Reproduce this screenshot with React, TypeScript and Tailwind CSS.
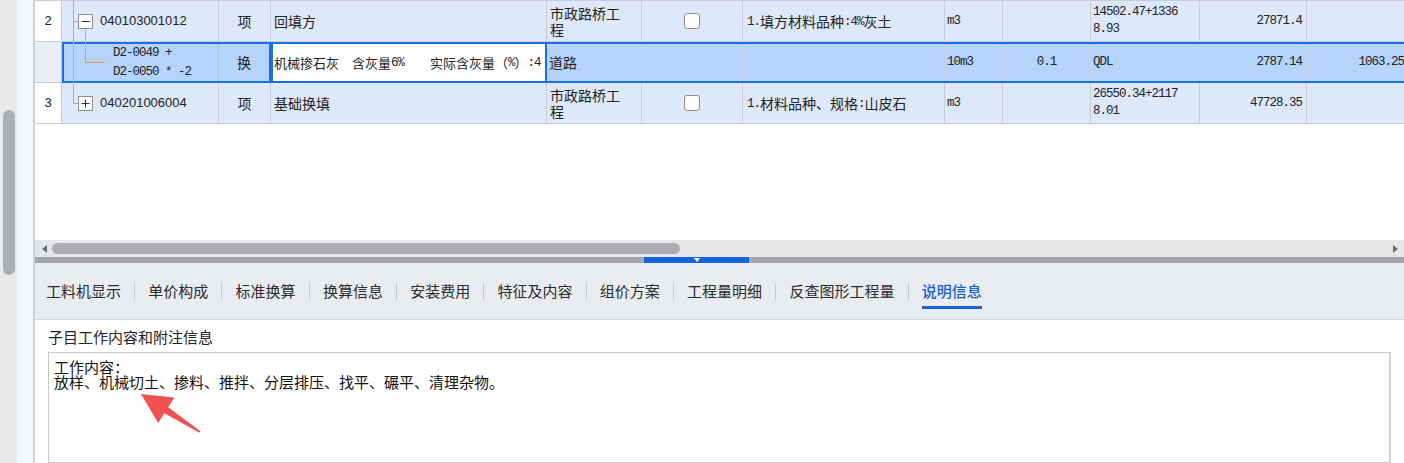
import React from 'react';

// column widths (px): no, code, type, name, major, check, feature, unit, qty, expr, amount, last
const W = ['w-[27px]', 'w-[157px]', 'w-[52px]', 'w-[276px]', 'w-[95px]', 'w-[101px]', 'w-[202px]', 'w-[58px]', 'w-[88px]', 'w-[109px]', 'w-[107px]', 'w-[97px]'];

const MONO = "font-['Liberation_Mono',monospace] text-[12.5px] tracking-[-1px]";

// ascii runs in a condensed mono face, cjk in the sans face (mimics SimSun half-width)
const Mix = ({ t }: { t: string }) => {
  const parts = t.split(/([\x00-\x7f]+)/).filter(Boolean);
  return (
    <>
      {parts.map((p, i) =>
        /^[\x00-\x7f]+$/.test(p) ? (
          <span key={i} className="relative top-[1px] font-['Liberation_Mono',monospace] text-[12.5px] tracking-[-1px] whitespace-pre">{p}</span>
        ) : (
          <span key={i}>{p}</span>
        )
      )}
    </>
  );
};

const Cell = ({ w, className = '', children }: { w: string; className?: string; children?: React.ReactNode }) => (
  <div className={`${w} shrink-0 h-full border-r border-[#c9ced6] flex items-center overflow-hidden ${className}`}>{children}</div>
);

const Check = () => <div className="w-4 h-4 border border-[#8c8c8c] rounded-[3px] bg-white" />;

const Tree = ({ kind }: { kind: 'open' | 'child' | 'closed' }) => (
  <svg className="absolute left-0 top-0 overflow-visible pointer-events-none" width="60" height="41">
    {kind === 'open' && (
      <g>
        <line x1="11.5" y1="0" x2="11.5" y2="41" stroke="#f29a50" />
        <line x1="11" y1="20.5" x2="16" y2="20.5" stroke="#f29a50" />
        <line x1="23.5" y1="28" x2="23.5" y2="41" stroke="#f29a50" />
        <rect x="16.5" y="13.5" width="14" height="14" fill="#fff" stroke="#8e8e8e" />
        <line x1="19.5" y1="20.5" x2="27.5" y2="20.5" stroke="#333" />
      </g>
    )}
    {kind === 'child' && (
      <g>
        <line x1="9.5" y1="-2" x2="9.5" y2="41" stroke="#f29a50" />
        <line x1="21.5" y1="-2" x2="21.5" y2="18.5" stroke="#f29a50" />
        <line x1="21" y1="18.5" x2="41" y2="18.5" stroke="#f29a50" />
      </g>
    )}
    {kind === 'closed' && (
      <g>
        <line x1="11.5" y1="0" x2="11.5" y2="20.5" stroke="#f29a50" />
        <line x1="11" y1="20.5" x2="16" y2="20.5" stroke="#f29a50" />
        <rect x="16.5" y="13.5" width="14" height="14" fill="#fff" stroke="#8e8e8e" />
        <line x1="19.5" y1="20.5" x2="27.5" y2="20.5" stroke="#333" />
        <line x1="23.5" y1="16.5" x2="23.5" y2="24.5" stroke="#333" />
      </g>
    )}
  </svg>
);

const tabs = ['工料机显示', '单价构成', '标准换算', '换算信息', '安装费用', '特征及内容', '组价方案', '工程量明细', '反查图形工程量', '说明信息'];

export default function App() {
  return (
    <div className="relative w-[1404px] h-[463px] overflow-hidden flex bg-white text-[#222] font-['Noto_Sans_CJK_SC',sans-serif]">
      {/* left gutter with vertical scrollbar */}
      <div className="w-[17px] shrink-0 bg-[#e8e9ea] flex flex-col items-center pt-[110px]">
        <div className="w-[12px] h-[165px] rounded-full bg-[#adb0b3]" />
      </div>
      <div className="w-[16px] shrink-0 bg-[#f1f8fe]" />
      <div className="w-[2px] shrink-0 bg-[#cdd1d6]" />

      <div className="flex-1 flex flex-col min-w-0">
        {/* grid */}
        <div className="h-[240px] border-t border-[#c9ced6] flex flex-col">
          <div className="flex h-[41px] border-b border-[#c9ced6] bg-[#dde8fa] text-[14px]">
            <Cell w={W[0]} className="bg-white justify-center font-['Liberation_Sans',sans-serif] text-[13px]">2</Cell>
            <Cell w={W[1]} className="relative pl-[38px] font-['Liberation_Sans',sans-serif] text-[13px]">
              <Tree kind="open" />
              040103001012
            </Cell>
            <Cell w={W[2]} className="justify-center">项</Cell>
            <Cell w={W[3]} className="pl-[3px]">回填方</Cell>
            <Cell w={W[4]} className="pl-[3px] leading-[16px]">市政路桥工<br />程</Cell>
            <Cell w={W[5]} className="justify-center"><Check /></Cell>
            <Cell w={W[6]} className="pl-[4px] whitespace-nowrap"><Mix t="1.填方材料品种:4%灰土" /></Cell>
            <Cell w={W[7]} className={`pl-[2px] ${MONO}`}>m3</Cell>
            <Cell w={W[8]} />
            <Cell w={W[9]} className={`pl-[2px] leading-[17px] ${MONO}`}><div>14502.47+1336<br />8.93</div></Cell>
            <Cell w={W[10]} className={`justify-end pr-[4px] ${MONO}`}>27871.4</Cell>
            <Cell w={W[11]} className="border-r-0" />
          </div>

          {/* selected sub row */}
          <div className="flex h-[41px] bg-[#b5d4fb] text-[14px]">
            <Cell w={W[0]} className="bg-[#eaeef4] border-b" />
            <div className="w-[209px] shrink-0 h-full flex border-2 border-[#1b6fe4]">
              <div className="relative w-[155px] h-full border-r border-[#b3bccb] flex items-center pl-[49px]">
                <Tree kind="child" />
                <div className={`leading-[19px] whitespace-pre ${MONO}`}>D2-0049 +{'\n'}D2-0050 * -2</div>
              </div>
              <div className="flex-1 flex items-center justify-center">换</div>
            </div>
            <div className="w-[276px] shrink-0 h-full border-2 border-[#1b6fe4] bg-white flex items-center pl-[1px] whitespace-nowrap overflow-hidden text-[13px]">
              <Mix t="机械掺石灰　含灰量6%　　实际含灰量（%）:4" />
            </div>
            <div className="flex-1 flex h-full border-y-2 border-[#1b6fe4]">
              <Cell w={W[4]} className="pl-[2px]">道路</Cell>
              <Cell w={W[5]} />
              <Cell w={W[6]} />
              <Cell w={W[7]} className={`pl-[2px] ${MONO}`}>10m3</Cell>
              <Cell w={W[8]} className={`justify-center ${MONO}`}>0.1</Cell>
              <Cell w={W[9]} className={`pl-[2px] ${MONO}`}>QDL</Cell>
              <Cell w={W[10]} className={`justify-end pr-[4px] ${MONO}`}>2787.14</Cell>
              <Cell w={W[11]} className={`border-r-0 justify-end ${MONO}`}>1063.25</Cell>
            </div>
          </div>

          <div className="flex h-[41px] border-b border-[#c9ced6] bg-[#dde8fa] text-[14px]">
            <Cell w={W[0]} className="bg-white justify-center font-['Liberation_Sans',sans-serif] text-[13px]">3</Cell>
            <Cell w={W[1]} className="relative pl-[38px] font-['Liberation_Sans',sans-serif] text-[13px]">
              <Tree kind="closed" />
              040201006004
            </Cell>
            <Cell w={W[2]} className="justify-center">项</Cell>
            <Cell w={W[3]} className="pl-[3px]">基础换填</Cell>
            <Cell w={W[4]} className="pl-[3px] leading-[16px]">市政路桥工<br />程</Cell>
            <Cell w={W[5]} className="justify-center"><Check /></Cell>
            <Cell w={W[6]} className="pl-[4px] whitespace-nowrap"><Mix t="1.材料品种、规格:山皮石" /></Cell>
            <Cell w={W[7]} className={`pl-[2px] ${MONO}`}>m3</Cell>
            <Cell w={W[8]} />
            <Cell w={W[9]} className={`pl-[2px] leading-[17px] ${MONO}`}><div>26550.34+2117<br />8.01</div></Cell>
            <Cell w={W[10]} className={`justify-end pr-[4px] ${MONO}`}>47728.35</Cell>
            <Cell w={W[11]} className="border-r-0" />
          </div>
          <div className="flex-1 bg-white" />
        </div>

        {/* horizontal scrollbar */}
        <div className="h-[17px] bg-[#e5e6e8] flex items-center">
          <svg className="ml-[7px]" width="5" height="8" viewBox="0 0 5 8"><path d="M5 0 L0 4 L5 8 Z" fill="#6b6d70" /></svg>
          <div className="ml-[5px] w-[628px] h-[11px] rounded-full bg-[#abadb1]" />
          <div className="flex-1" />
          <svg className="mr-[6px]" width="5" height="8" viewBox="0 0 5 8"><path d="M0 0 L5 4 L0 8 Z" fill="#6b6d70" /></svg>
        </div>

        {/* splitter */}
        <div className="h-[6px] bg-[#a5a7aa] flex">
          <div className="ml-[609px] w-[105px] h-full bg-[#1664d9] flex justify-center items-center">
            <svg width="6" height="4" viewBox="0 0 6 4"><path d="M0 0 L6 0 L3 4 Z" fill="#fff" /></svg>
          </div>
        </div>

        {/* tabs */}
        <div className="h-[57px] bg-[#e9ecf0] border-b border-[#d5d8dc] flex items-start pl-[11px] gap-[13.15px] text-[15px] text-[#2b2b2b]">
          {tabs.map((t, i) => (
            <React.Fragment key={t}>
              {i > 0 && <div className="w-px h-[17px] mt-[20px] bg-[#c6c9ce]" />}
              <div
                className={`pt-[18px] pb-[5px] leading-[20px] border-b-[3px] ${
                  i === tabs.length - 1 ? 'border-[#1a62d6] text-[#1a5fd0] font-medium' : 'border-transparent'
                }`}
              >
                {t}
              </div>
            </React.Fragment>
          ))}
        </div>

        {/* description panel */}
        <div className="flex-1 bg-white px-[13px] pt-[7px] flex flex-col">
          <div className="text-[15px] leading-[20px] mb-[5px]">子目工作内容和附注信息</div>
          <div className="flex-1 border border-[#c9c9c9] border-r-2 border-r-[#d2d2d2] pl-[5px] pt-[6px] text-[15px] leading-[15px] text-[#111]">
            <div>工作内容：</div>
            <div>放样、机械切土、掺料、推拌、分层排压、找平、碾平、清理杂物。</div>
          </div>
        </div>
      </div>

      {/* red annotation arrow */}
      <svg className="absolute inset-0 pointer-events-none" width="1404" height="463">
        <polygon
          points="141,394 174.4,397.6 168.2,407.3 200.5,431.2 199.5,432.8 164.4,413.3 158.2,422.9"
          fill="#f05151"
        />
      </svg>
    </div>
  );
}
